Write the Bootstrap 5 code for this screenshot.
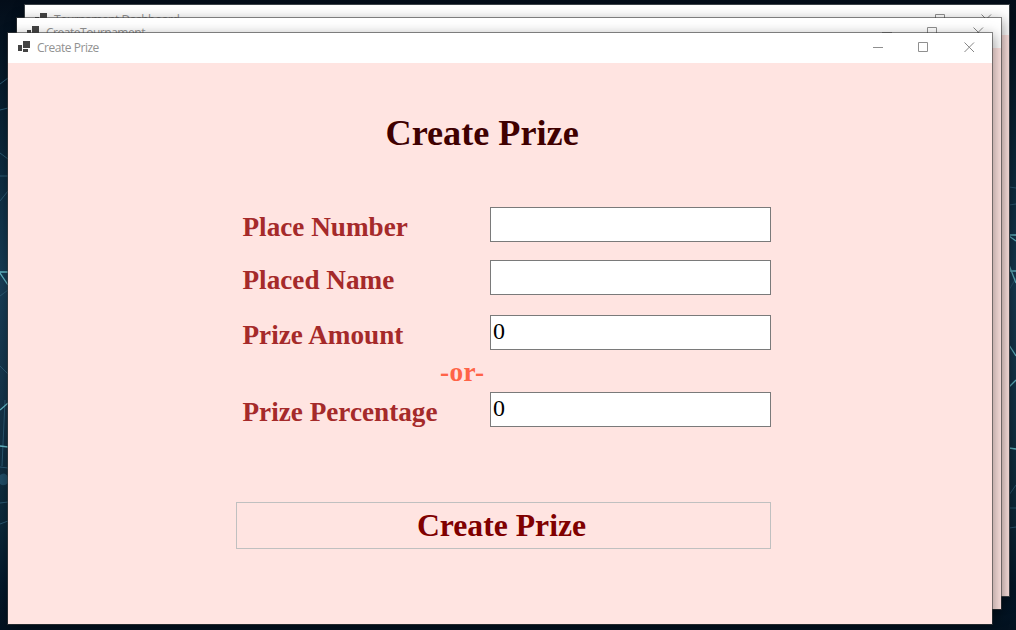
<!DOCTYPE html>
<html lang="en">
<head>
<meta charset="utf-8">
<meta name="viewport" content="width=device-width, initial-scale=1">
<title>Create Prize</title>
<link href="https://cdn.jsdelivr.net/npm/bootstrap@5.3.0/dist/css/bootstrap.min.css" rel="stylesheet">
<style>
  body { height: 630px; background: #04101f; font-family: "Liberation Serif", "Times New Roman", serif; }
  .desk { width: 1016px; height: 630px; }
  .wallpaper { inset: 0; width: 1016px; height: 630px; }
  /* desktop windows */
  .win { width: 986px; height: 593px; border: 1px solid #3b4247; background: #ffe4e1; background-clip: padding-box; box-shadow: 2px 3px 12px rgba(0,0,0,.36); }
  .win-dash { left: 24px; top: 4px; }
  .win-tour { left: 16px; top: 17px; border-color: rgba(60,60,60,.6); }
  .win-prize { left: 7px; top: 32px; border-color: rgba(60,60,60,.6); }
  .titlebar { height: 30px; background: #fff; font: 12px/30px "Open Sans", sans-serif; color: #929292; padding-left: 10px; }
  .win-title { margin-left: 6px; font-size: 12px; letter-spacing: -.47px; }
  .ctl { width: 45.5px; height: 30px; }
  .ctl svg { display: block; margin: 9px auto 0; }
  /* form */
  .heading { font-size: 36.2px; line-height: 40px; color: #400000; margin: 50px 0 0 377.5px; }
  .form-area { margin: 54px 0 0 228px; width: 535px; }
  .field { height: 35px; }
  .field label { width: 254px; padding-left: 6.5px; font-size: 27.2px; line-height: 30px; padding-top: 5px; color: #a52a2a; }
  .field .form-control { width: 281px; height: 35px; padding: 0 2px 2px; border: 1px solid #7a7a7a; font: 24px/28px "Liberation Serif", serif; color: #000; }
  .gap-a { margin-top: 18px; }
  .gap-b { margin-top: 20px; }
  .or { height: 42px; padding: 7px 0 0 204px; font-size: 27.3px; line-height: 30px; letter-spacing: .4px; color: #ff6347; }
  .btn-create { margin-top: 75px; height: 47px; border: 1px solid #c0c0c0; font: bold 31.7px/45px "Liberation Serif", serif; color: #800000; padding: 0 4px 0 0; }
</style>
<script src="https://cdn.jsdelivr.net/npm/bootstrap@5.3.0/dist/js/bootstrap.bundle.min.js"></script>
</head>
<body class="m-0 overflow-hidden">
<svg width="0" height="0" class="position-absolute" aria-hidden="true">
  <symbol id="app" viewBox="0 0 13 12"><path fill="#444" d="M5 0h7v7H5zM0 4h4v6H0zM5 8h5v3H5z"/></symbol>
  <symbol id="min" viewBox="0 0 11 11"><path fill="#8f8f8f" d="M0 5h10v1H0z"/></symbol>
  <symbol id="max" viewBox="0 0 11 11"><path fill="none" stroke="#8f8f8f" d="M.5.5h9v9h-9z"/></symbol>
  <symbol id="close" viewBox="0 0 11 11"><path fill="none" stroke="#858585" d="M.5.5l9.5 9.5M10 .5L.5 10"/></symbol>
</svg>
<div class="desk position-relative overflow-hidden">
  <svg class="wallpaper position-absolute" viewBox="0 0 1016 630" preserveAspectRatio="none" aria-hidden="true">
    <defs><linearGradient id="night" x2="0" y2="1">
      <stop offset="0" stop-color="#030d19"/><stop offset=".13" stop-color="#071b2b"/><stop offset=".32" stop-color="#0f3045"/>
      <stop offset=".45" stop-color="#183c55"/><stop offset=".65" stop-color="#143348"/><stop offset=".83" stop-color="#0c2839"/><stop offset=".93" stop-color="#04182a"/><stop offset="1" stop-color="#031220"/>
    </linearGradient></defs>
    <path fill="url(#night)" d="M0 0h1016v630H0z"/>
    <path fill="none" stroke="#2b5871" d="M0 84l8-6M0 110l8-2M0 153l8 6M0 176h8M0 201l8-10M0 296l8-6M0 366l8 8M0 467l8 1M0 503l8-1M0 524l8-3M5 400L2 466M1009 187l7 1M1009 205l7-1M1009 290l7-12M1009 495l7-10M1009 508h7M1009 528l7-1"/>
    <path fill="none" stroke="#63b6c4" stroke-width="1.3" d="M0 272h8M0 273l8 12M0 410l8-7M0 446l8 1M1009 235h7M1009 236l7 5M1009 265l7 18M1009 271h7M1009 345l7 11M1009 387l7-7M1009 448l7 1"/>
    <path fill="#204c65" d="M0 475q5-4 8 2v6q-4 4-8 1z"/>
  </svg>

  <section class="win win-dash position-absolute">
    <div class="titlebar d-flex align-items-start">
      <svg class="mt-2" width="13" height="12"><use href="#app"/></svg><span class="win-title flex-grow-1">Tournament Dashboard</span>
      <span class="ctl"><svg width="11" height="11"><use href="#min"/></svg></span><span class="ctl"><svg width="11" height="11"><use href="#max"/></svg></span><span class="ctl"><svg width="11" height="11"><use href="#close"/></svg></span>
    </div>
  </section>
  <section class="win win-tour position-absolute">
    <div class="titlebar d-flex align-items-start">
      <svg class="mt-2" width="13" height="12"><use href="#app"/></svg><span class="win-title flex-grow-1">CreateTournament</span>
      <span class="ctl"><svg width="11" height="11"><use href="#min"/></svg></span><span class="ctl"><svg width="11" height="11"><use href="#max"/></svg></span><span class="ctl"><svg width="11" height="11"><use href="#close"/></svg></span>
    </div>
  </section>
  <section class="win win-prize position-absolute">
    <div class="titlebar d-flex align-items-start">
      <svg class="mt-2" width="13" height="12"><use href="#app"/></svg><span class="win-title flex-grow-1">Create Prize</span>
      <span class="ctl"><svg width="11" height="11"><use href="#min"/></svg></span><span class="ctl"><svg width="11" height="11"><use href="#max"/></svg></span><span class="ctl"><svg width="11" height="11"><use href="#close"/></svg></span>
    </div>
    <h1 class="heading fw-bold">Create Prize</h1>
    <form class="form-area">
      <div class="field d-flex"><label class="fw-bold" for="num">Place Number</label><input id="num" class="form-control rounded-0" type="text"></div>
      <div class="field d-flex gap-a"><label class="fw-bold" for="nam">Placed Name</label><input id="nam" class="form-control rounded-0" type="text"></div>
      <div class="field d-flex gap-b"><label class="fw-bold" for="amt">Prize Amount</label><input id="amt" class="form-control rounded-0" type="text" value="0"></div>
      <div class="or fw-bold">-or-</div>
      <div class="field d-flex"><label class="fw-bold" for="pct">Prize Percentage</label><input id="pct" class="form-control rounded-0" type="text" value="0"></div>
      <button class="btn btn-create rounded-0 w-100" type="button">Create Prize</button>
    </form>
  </section>
</div>
</body>
</html>
